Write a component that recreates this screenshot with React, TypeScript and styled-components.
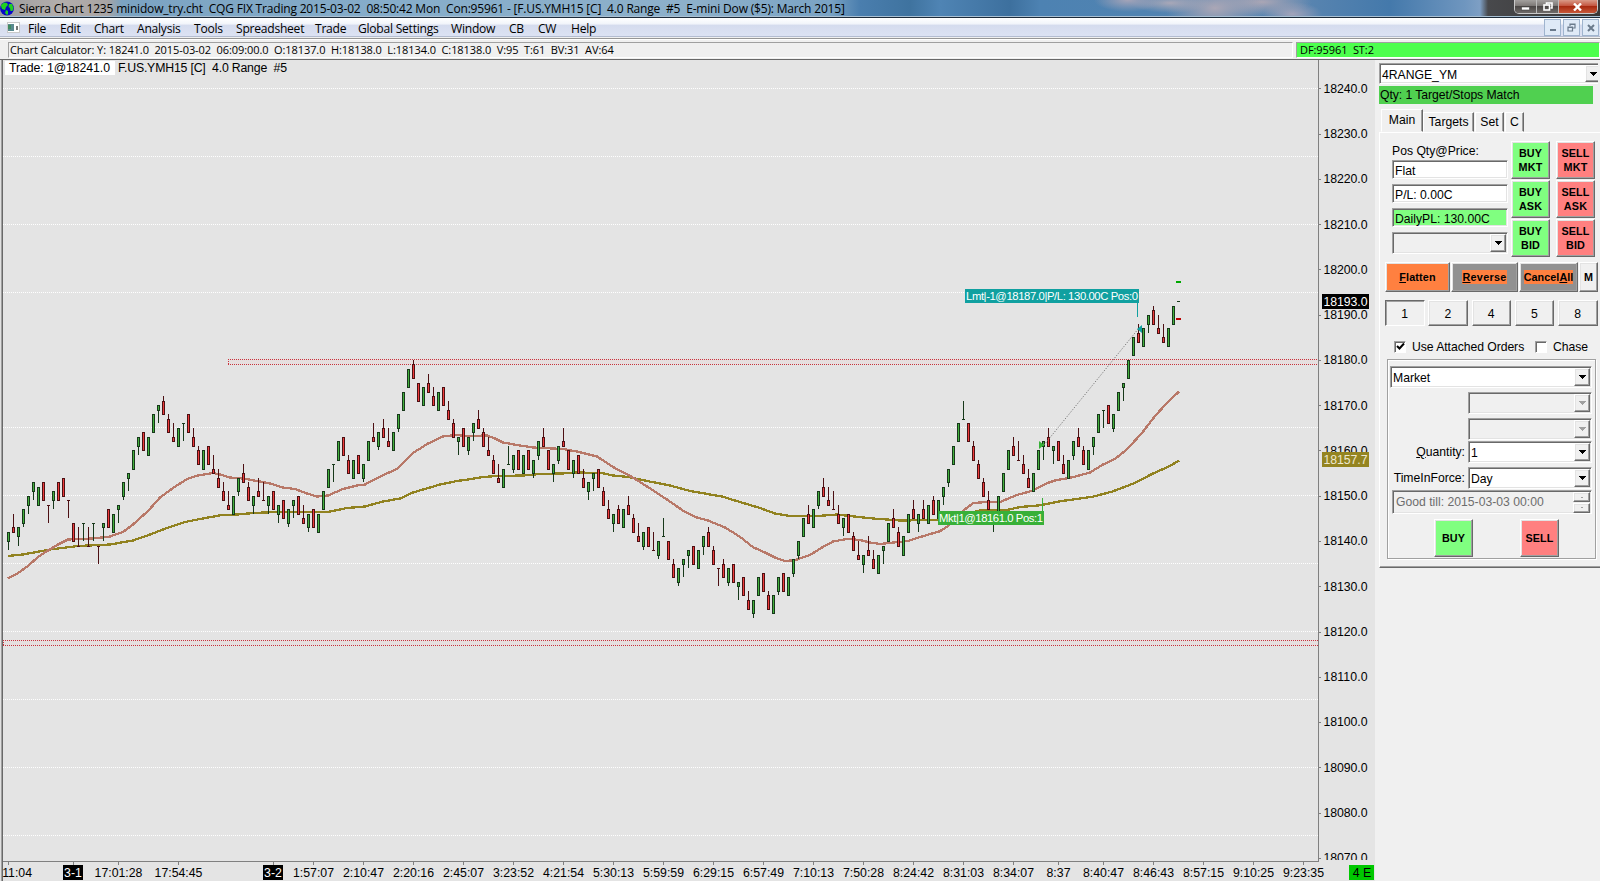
import React from 'react';
import styled, { createGlobalStyle, css } from 'styled-components';

const GlobalStyle = createGlobalStyle`
  * { box-sizing: border-box; }
  html, body { margin: 0; padding: 0; overflow: hidden; }
  body { background: #f0f0f0; font-family: 'Liberation Sans', Arial, sans-serif; font-size: 13px; color: #000; }
`;

/* ---------- chart data ---------- */

// direction, high (above 18000) and body size in points; t / f is a doji on top / at the foot
const BARS = `g142:2 r146:1 g143:2 g147:3 g150:2 g153:2 g152:4 r153:4 r148:t g151:2 r153:4 r154:4 r149:t r144:4 r143:f
g144:t r143:f g144:t r139:t g144:1 r147:4 g146:4 g148:1 g153:3 g155:1 g160:4 g163:2 r164:4 g163:4 g168:4
g170:1 r172:3 r168:3 r166:1 g165:4 g166:t r168:4 r165:2 r161:3 g160:4 r161:4 r159:1 r156:2 r153:2 r151:1
g150:4 g154:3 r157:2 r153:3 g150:2 r154:1 r153:f g150:2 r151:4 g148:2 r149:4 g147:3 g149:1 r150:4 r148:1
g146:3 r147:4 g146:4 g151:4 g156:4 g157:t g162:4 r163:4 r159:3 g158:4 r159:4 g157:3 g162:4 r166:1 g164:3
r167:2 r165:1 g164:4 g168:3 g173:4 g178:4 r180:3 r175:4 g174:4 r177:2 r174:2 g173:4 r174:4 r171:2 r167:3
g163:1 r165:4 g163:3 g166:2 r169:2 r165:3 r163:1 r159:3 r157:1 g156:4 g161:f g159:3 r160:4 g159:4 r160:4
g158:3 g162:3 r165:2 r160:4 g157:2 g161:3 r165:1 r160:4 g158:3 r159:4 r156:2 g153:2 g155:1 r156:4 r152:3
r149:2 g146:2 r148:3 g147:4 r150:2 r146:3 r144:1 g142:3 r143:4 r142:f g140:3 g145:f r140:4 r136:3 g134:3
g136:1 g138:1 r139:4 g138:4 g141:2 r143:3 r139:3 r134:t r136:3 g134:3 r135:4 g131:1 r132:4 r129:2 g127:3
g132:4 r133:4 r129:3 g128:4 g132:3 r133:4 g132:4 g136:3 g140:3 g145:4 r148:2 g147:4 g151:3 r154:2 r152:1
r151:f r148:2 g145:2 r146:4 r142:3 r140:1 g137:2 r141:1 r138:2 g137:4 g139:1 g144:4 r147:2 r143:3 g141:4
g146:4 r149:2 g146:2 r149:2 g148:4 r150:3 g149:4 g152:2 g156:3 g161:4 g166:4 g171:f r166:4 r162:3 r158:3
r154:3 r151:2 g146:2 g150:4 g155:4 g160:4 r163:2 r162:f r159:2 r156:2 g155:4 g160:4 g162:1 r165:2 g161:1
r162:4 r159:2 g158:4 g162:3 r165:2 r161:3 g160:4 g163:2 g168:4 g169:t r170:4 g168:3 g173:4 g175:1 g180:4
g185:4 r188:2 g187:4 g190:2 r192:3 r190:1 r188:1 g187:4 g192:4`.split(/\s+/);

const FAST_MA = `8,578.5 18,573 28,566 38,557 48,550.5 58,544.5 68,539.5 78,539 93,538.5 110,536.5 123,532 133,524.5
148,511 160,497.5 173,488 187,479 198,475.5 213,473 220,474.5 230,477.5 243,478.5 260,481.5 270,483.5 283,487.5
295,489 307,493.5 317,496.5 328,495.5 343,489 357,485.5 365,484.5 377,478 388,473 397,469 413,453 428,443.5
443,436.5 455,435 468,436 487,435.5 495,438.5 503,442.5 517,445 533,447.5 563,449 577,451.5 597,456.5 613,467
632,477 647,486.5 667,499.5 685,512 697,517.5 708,520.5 725,527.5 740,536.8 753,547.2 765,552.5 775,557.5
785,561 795,560.2 810,555 822,547.5 833,541.5 847,539 860,540 870,542.5 880,544 893,542.5 907,541.2 923,536.2
940,531.2 948,526 964,510 973,503.2 985,502 1000,502 1017,495 1033,490.5 1047,483.2 1055,480.5 1073,477.2
1090,472.5 1103,464.5 1115,459 1127,449.2 1142,433 1155,416 1167,403 1179,391.5`;

const SLOW_MA = `8,556 23,554.5 50,549.5 78,546 110,544.5 133,540.5 150,534.5 167,528 185,522 200,519 222,515 238,514.5
253,513 277,512 328,512 347,508 365,506.5 383,501.5 400,498.5 413,492.5 440,484.5 457,481 468,479.5 483,477
497,476 523,475.5 540,474 562,473.5 577,472.5 602,473 613,475.5 628,477 647,481 670,485.5 690,491 722,496.5
740,502 760,508 775,513.5 790,516 817,516 837,514.5 850,516 873,518.5 900,520.5 938,520 980,510.5 1007,510
1020,507 1040,505.3 1060,501.3 1093,496.7 1113,491.3 1133,483.7 1153,473.5 1170,466 1179,460.5`;

const TIMES: [number, string][] = [
  [118, '17:01:28'], [178, '17:54:45'], [313, '1:57:07'], [363, '2:10:47'], [413, '2:20:16'], [463, '2:45:07'],
  [513, '3:23:52'], [563, '4:21:54'], [613, '5:30:13'], [663, '5:59:59'], [713, '6:29:15'], [763, '6:57:49'],
  [813, '7:10:13'], [863, '7:50:28'], [913, '8:24:42'], [963, '8:31:03'], [1013, '8:34:07'], [1058, '8:37'],
  [1103, '8:40:47'], [1153, '8:46:43'], [1203, '8:57:15'], [1253, '9:10:25'], [1303, '9:23:35'],
];
const DAYS: [number, string][] = [[73, '3-1'], [273, '3-2']];

const GRID = [88, 156, 224, 292, 427, 495, 563, 631, 699, 767, 835];
const PRICES = Array.from({ length: 18 }, (_, i) => 18240 - i * 10);

const priceY = (p: number) => 88.3 + (240 - p) * 4.527;

const Candle = ({ bar, x }: { bar: string; x: number }) => {
  const up = bar[0] === 'g';
  const [high, body] = bar.slice(1).split(':');
  const top = Number(high);
  const dark = up ? '#17381a' : '#4c1013';
  const y0 = Math.round(priceY(top));
  const y1 = Math.round(priceY(top - 4));
  if (body === 't' || body === 'f') {
    return (
      <g fill={dark}>
        <rect x={x} y={y0} width={1} height={y1 - y0} />
        <rect x={x - 1} y={body === 't' ? y0 : y1} width={3} height={1} />
      </g>
    );
  }
  const size = Number(body);
  const b0 = up ? y0 : Math.round(priceY(top - 4 + size));
  const b1 = (up ? Math.round(priceY(top - size)) : y1) + 1;
  return (
    <g fill={dark}>
      <rect x={x} y={y0} width={1} height={y1 - y0} />
      <rect x={x - 1} y={b0} width={3} height={b1 - b0} />
      <rect x={x} y={b0 + 1} width={1} height={b1 - b0 - 2} fill={up ? '#43b03c' : '#ee3b3b'} />
    </g>
  );
};

const Zone = ({ x, y }: { x: number; y: number }) => (
  <g>
    <rect x={x} y={y} width={1318 - x} height={5} fill="#e6dfdf" />
    <g stroke="#c8323c" strokeDasharray="1 1">
      <line x1={x} x2={1318} y1={y + 0.5} y2={y + 0.5} />
      <line x1={x} x2={1318} y1={y + 5.5} y2={y + 5.5} />
      <line x1={x + 0.5} x2={x + 0.5} y1={y} y2={y + 5} />
    </g>
  </g>
);

const Chart = () => (
  <ChartSvg width={1375} height={821} viewBox="0 60 1375 821">
    <rect x={0} y={60} width={1375} height={821} fill="#e4e4e4" />
    <rect x={0} y={60} width={1} height={821} fill="#e0e0e0" />
    <rect x={1} y={60} width={1} height={821} fill="#a0a0a0" />
    <rect x={2} y={60} width={1} height={821} fill="#696969" />

    <g stroke="#fff" strokeDasharray="1 1" shapeRendering="crispEdges">
      {GRID.map((y) => (
        <line key={y} x1={3} x2={1318} y1={y + 0.5} y2={y + 0.5} />
      ))}
    </g>
    <g shapeRendering="crispEdges">
      <Zone x={228} y={359} />
      <Zone x={3} y={640} />
    </g>

    <g fill="none" strokeWidth={2.3} shapeRendering="crispEdges">
      <polyline points={SLOW_MA} stroke="#918220" />
      <polyline points={FAST_MA} stroke="#b87868" />
    </g>
    <g shapeRendering="crispEdges">
      {BARS.map((bar, i) => (
        <Candle key={i} bar={bar} x={8 + i * 5} />
      ))}
      <rect x={1177} y={301} width={3} height={1} fill="#17381a" />
      <rect x={1176} y={281} width={5} height={2} fill="#00a800" />
      <rect x={1176} y={318} width={5} height={2} fill="#b80000" />
    </g>

    <line x1={1044} y1={445} x2={1139} y2={328} stroke="#777" strokeDasharray="1.2 1.6" />
    <path d="M1039 441l5 4-5 4z" fill="#38b038" />
    <path d="M1142 325l-5 4 5 4z" fill="#10a0a0" />
    <rect x={1042} y={498} width={1} height={13} fill="#38b038" />
    <rect x={1137} y={303} width={1} height={14} fill="#10a0a0" />
    <rect x={965} y={289} width={174} height={14} fill="#10a0a0" />
    <rect x={938} y={511} width={106} height={14} fill="#38b038" />
    <g fill="#fff" fontSize={11.3}>
      <text x={966} y={300} textLength={172}>Lmt|-1@18187.0|P/L: 130.00C Pos:0</text>
      <text x={939} y={522} textLength={104}>Mkt|1@18161.0 Pos:1</text>
    </g>

    <rect x={5} y={61} width={110} height={14} fill="#fff" />
    <g fontSize={12.3}>
      <text x={9} y={72} textLength={101}>Trade: 1@18241.0</text>
      <text x={118} y={72} textLength={169}>{'F.US.YMH15 [C]\u00a0 4.0 Range\u00a0 #5'}</text>
    </g>

    {/* price scale */}
    <g fill="#808080" shapeRendering="crispEdges">
      <rect x={1318} y={60} width={1} height={802} />
      <rect x={3} y={861} width={1316} height={1} />
      {PRICES.map((p) => (
        <rect key={p} x={1319} y={Math.round(priceY(p - 18000))} width={2} height={1} />
      ))}
      {[8, ...DAYS.map((d) => d[0]), ...TIMES.map((t) => t[0])].map((x) => (
        <rect key={x} x={x} y={862} width={1} height={3} />
      ))}
    </g>
    <clipPath id="scale">
      <rect x={1319} y={60} width={56} height={800} />
    </clipPath>
    <g fontSize={12.3} clipPath="url(#scale)">
      {PRICES.map((p) => (
        <text key={p} x={1323.5} y={priceY(p - 18000) + 4.4} textLength={44}>{p}.0</text>
      ))}
    </g>
    <rect x={1322} y={294} width={47} height={15} fill="#000" />
    <rect x={1322} y={452} width={47} height={15} fill="#948420" />
    <g fontSize={12.3} fill="#fff">
      <text x={1323.5} y={306} textLength={44}>18193.0</text>
      <text x={1323.5} y={464} textLength={44} fill="#eee8d0">18157.7</text>
    </g>

    {/* time scale */}
    <g fontSize={12.3} textAnchor="middle">
      <text x={32} y={877} textAnchor="end">11:04</text>
      {TIMES.map(([x, label]) => (
        <text key={x} x={x + 0.5} y={877}>{label}</text>
      ))}
      {DAYS.map(([x, label]) => (
        <g key={x}>
          <rect x={x - 10} y={865} width={20} height={15} fill="#000" />
          <text x={x} y={877} fill="#fff">{label}</text>
        </g>
      ))}
      <rect x={1349} y={865} width={25} height={15} fill="#00c800" />
      <text x={1362} y={877}>4 E</text>
    </g>
  </ChartSvg>
);

/* ---------- frame ---------- */

const MENU: [string, number][] = [
  ['File', 32], ['Edit', 34], ['Chart', 43], ['Analysis', 57], ['Tools', 42], ['Spreadsheet', 79], ['Trade', 43],
  ['Global Settings', 93], ['Window', 58], ['CB', 29], ['CW', 33], ['Help', 40],
];

const Arrow = ({ off, up, small }: { off?: boolean; up?: boolean; small?: boolean }) => (
  <svg width={small ? 4 : 7} height={small ? 2 : 4} viewBox="0 0 7 4" shapeRendering="crispEdges">
    <path d={up ? 'M0 4h7L3.5 0z' : 'M0 0h7L3.5 4z'} fill={off ? '#a0a0a0' : '#000'} />
  </svg>
);

const Combo = ({ value, width, height = 22, off, grey }: {
  value?: string; width: number; height?: number; off?: boolean; grey?: boolean;
}) => (
  <Field $w={width} $h={height} $bg={off || grey ? '#f0f0f0' : '#fff'}>
    <FieldText>{value}</FieldText>
    <DropButton>
      <Arrow off={off} />
    </DropButton>
  </Field>
);

const SIDES = [['BUY', '#80ff80'], ['SELL', '#ff8080']];

const App = () => (
  <Screen>
    <GlobalStyle />
    <TitleBar>
      <svg width={14} height={15} viewBox="0 0 14 15">
        <circle cx={7} cy={7.5} r={6.9} fill="#0808c8" />
        <path d="M1 4L4 1.5l3 .5 1 2-2 2-1 3-3-1-1-3zM6 9l2 1 0 3-1 1-2-2zM9 3l3 0 1.500 4-1 3-2 0-.5-3-1.500-1z" fill="#20d020" />
      </svg>
      <TitleText>Sierra Chart 1235 minidow_try.cht  CQG FIX Trading 2015-03-02  08:50:42 Mon  Con:95961 - [F.US.YMH15 [C]  4.0 Range  #5  E-mini Dow ($5): March 2015]</TitleText>
      <Caption>
        <CaptionButton $w={22}>
          <svg width={9} height={8}><rect x={0.5} y={4} width={8} height={3} fill="#fff" stroke="#444" strokeWidth={0.6} /></svg>
        </CaptionButton>
        <CaptionButton $w={22}>
          <svg width={10} height={9} fill="none" stroke="#fff" strokeWidth={1.6}>
            <path d="M3.500 2.500V1H9v5H7.500" />
            <rect x={1} y={3} width={5.5} height={5} />
          </svg>
        </CaptionButton>
        <CaptionButton $w={38} $close>
          <svg width={9} height={8} stroke="#fff" strokeWidth={2.4}><path d="M1 .5l7 7M8 .5l-7 7" /></svg>
        </CaptionButton>
      </Caption>
    </TitleBar>

    <MenuBar>
      <MenuIcon width={13} height={11} shapeRendering="crispEdges">
        <rect x={0.5} y={0.5} width={12} height={10} fill="#fff" stroke="#c8c8c8" />
        <rect x={1} y={2} width={6} height={7} fill="#5a8a90" />
        <rect x={1} y={3} width={3} height={4} fill="#3f8a60" />
        <rect x={9} y={4} width={2} height={4} fill="#777" />
      </MenuIcon>
      {MENU.map(([label, width]) => (
        <MenuItem key={label} $w={width}>{label}</MenuItem>
      ))}
      <MdiButtons>
        <MdiButton>
          <svg width={8} height={8}><rect x={1} y={5} width={6} height={2} fill="#6a7a8c" /></svg>
        </MdiButton>
        <MdiButton>
          <svg width={9} height={9} fill="none" stroke="#6a7a8c" strokeWidth={1.2}>
            <path d="M3 3V1h5v4H6M3 1.500h5" />
            <path d="M1 4h4.500v4H1zM1 4.500h4.500" />
          </svg>
        </MdiButton>
        <MdiButton>
          <svg width={8} height={8} stroke="#6a7a8c" strokeWidth={2}><path d="M1 1l6 6M7 1l-6 6" /></svg>
        </MdiButton>
      </MdiButtons>
    </MenuBar>

    <StatusRow>
      <StatusCell $w={1285}>Chart Calculator: Y: 18241.0  2015-03-02  06:09:00.0  O:18137.0  H:18138.0  L:18134.0  C:18138.0  V:95  T:61  BV:31  AV:64</StatusCell>
      <StatusCell $w={304} $green>DF:95961  ST:2</StatusCell>
    </StatusRow>

    <Workspace>
      <Chart />
      <TradePanel>
        <SymbolCombo>
          <Combo value="4RANGE_YM" width={224} height={21} />
        </SymbolCombo>
        <MatchBar>Qty: 1 Target/Stops Match</MatchBar>
        <Tabs>
          <Tab $w={42} $active>Main</Tab>
          <Tab $w={51}>Targets</Tab>
          <Tab $w={29}>Set</Tab>
          <Tab $w={19}>C</Tab>
        </Tabs>
        <TabPage>
          <PositionRow>
            <PositionInfo>
              <Label>Pos Qty@Price:</Label>
              <Field $w={116} $h={19} $bg="#fff"><FieldText>Flat</FieldText></Field>
              <Field $w={116} $h={19} $bg="#fff"><FieldText>P/L: 0.00C</FieldText></Field>
              <Field $w={116} $h={19} $bg="#80ff80"><FieldText>DailyPL: 130.00C</FieldText></Field>
              <Combo width={116} grey />
            </PositionInfo>
            <OrderGrid>
              {['MKT', 'ASK', 'BID'].map((kind) =>
                SIDES.map(([side, colour]) => (
                  <BigButton key={side + kind} $w={39} $h={38} $bg={colour}>{side}<br />{kind}</BigButton>
                ))
              )}
            </OrderGrid>
          </PositionRow>

          <ActionRow>
            <BigButton $w={65} $h={30} $bg="#ff8040"><span><u>F</u>latten</span></BigButton>
            <BigButton $w={67} $h={30} $bg="#919191"><Mark><u>R</u>everse</Mark></BigButton>
            <BigButton $w={59} $h={30} $bg="#919191"><Mark $tight>Cancel<u>A</u>ll</Mark></BigButton>
            <BigButton $w={19} $h={30} $bg="#f0f0f0">M</BigButton>
          </ActionRow>

          <QtyRow>
            {['1', '2', '4', '5', '8'].map((n) => (
              <QtyButton key={n} $pressed={n === '1'}>{n}</QtyButton>
            ))}
          </QtyRow>

          <CheckRow>
            <CheckBox>
              <svg width={9} height={9} fill="none" stroke="#000" strokeWidth={2}><path d="M1 4l2.500 2.500L8 1.500" /></svg>
            </CheckBox>
            <CheckLabel $w={123}>Use Attached Orders</CheckLabel>
            <CheckBox />
            <CheckLabel $w={40}>Chase</CheckLabel>
          </CheckRow>

          <OrderGroup>
            <Combo value="Market" width={202} />
            <FormRow $mt={4}><Combo width={124} off /></FormRow>
            <FormRow $mt={4}><Combo width={124} off /></FormRow>
            <FormRow $mt={1}>
              <FormLabel><u>Q</u>uantity:</FormLabel>
              <Combo value="1" width={124} />
            </FormRow>
            <FormRow $mt={4}>
              <FormLabel>TimeInForce:</FormLabel>
              <Combo value="Day" width={124} />
            </FormRow>
            <DateRow>
              <Field $w={200} $h={24} $bg="#f0f0f0">
                <FieldText $off>Good till: 2015-03-03 00:00</FieldText>
                <Spinner>
                  <SpinButton><Arrow off up small /></SpinButton>
                  <SpinButton><Arrow off small /></SpinButton>
                </Spinner>
              </Field>
            </DateRow>
            <SubmitRow>
              {SIDES.map(([side, colour]) => (
                <BigButton key={side} $w={39} $h={38} $bg={colour}>{side}</BigButton>
              ))}
            </SubmitRow>
          </OrderGroup>
        </TabPage>
      </TradePanel>
    </Workspace>
  </Screen>
);

const raised = css`
  border: 1px solid;
  border-color: #fff #696969 #696969 #fff;
  box-shadow: inset -1px -1px 0 #a0a0a0, inset 1px 1px 0 #e3e3e3;
`;

const Screen = styled.div`
  width: 1600px;
  height: 881px;
  display: flex;
  flex-direction: column;
  overflow: hidden;
  background: #f0f0f0;
`;

const TitleBar = styled.div`
  display: flex;
  align-items: center;
  height: 18px;
  flex: none;
  border-bottom: 1px solid #1d2b3a;
  box-shadow: inset 0 -1px 0 #a9c0d3;
  background:
    radial-gradient(ellipse 34px 12px at 1128px 0, #a5a4b8, transparent),
    radial-gradient(ellipse 40px 10px at 1170px 3px, #a9a8b8, transparent),
    radial-gradient(ellipse 50px 26px at 1215px 8px, #aba7b6, transparent),
    radial-gradient(ellipse 50px 14px at 1262px 2px, #aaa6b5, transparent),
    radial-gradient(ellipse 30px 12px at 1292px 14px, #a3a4ba, transparent),
    linear-gradient(90deg, #9d9d9f 0, #b3aeac 60px, #a8a4a4 108px, #7ba3c2 122px, #86adca 400px, #8db0ca 690px,
      #7aa3c4 830px, #4a7eae 860px, #3f739f 910px, #4f84b4 940px, #3d709e 1010px, #4d82b2 1040px, #5083b1 1140px,
      #5a85b0 1300px, #4479ab 1390px, #6f96bf 1465px, #7e9fc4 1480px, #48494c 1488px, #3a3736 1600px);
`;

const TitleText = styled.div`
  flex: 1;
  margin-left: 5px;
  font: 12px 'Open Sans', 'Noto Sans', sans-serif;
  letter-spacing: -0.18px;
  line-height: 17px;
  white-space: pre;
`;

const Caption = styled.div`
  display: flex;
  align-self: flex-start;
  height: 14px;
  margin-right: 2px;
  border: 1px solid #c9c9c9;
  border-top: 0;
  border-radius: 0 0 5px 5px;
  overflow: hidden;
`;

const CaptionButton = styled.div<{ $w: number; $close?: boolean }>`
  display: flex;
  align-items: center;
  justify-content: center;
  width: ${(p) => p.$w}px;
  border-right: 1px solid ${(p) => (p.$close ? 'transparent' : '#bbb')};
  background: ${(p) =>
    p.$close
      ? 'linear-gradient(#d99a88 0, #c4553f 45%, #a82a10 50%, #c8583a)'
      : 'linear-gradient(#a3a09e 0, #7c7876 45%, #4b4746 50%, #6f6b69)'};
`;

const MenuBar = styled.div`
  display: flex;
  align-items: center;
  height: 19px;
  flex: none;
  padding: 1px 0 0 7px;
  border-bottom: 1px solid #b3bcd0;
  background: linear-gradient(#fff 0, #f3f6fb 30%, #e6eaf5 36%, #d5dcee 40%, #dce2f3 100%);
  font: 12.1px 'Open Sans', 'Noto Sans', sans-serif;
`;

const MenuIcon = styled.svg`
  margin-right: 8px;
`;

const MenuItem = styled.div<{ $w: number }>`
  flex: 0 0 ${(p) => p.$w}px;
  letter-spacing: -0.25px;
  white-space: nowrap;
  line-height: 17px;
  padding-top: 1px;
`;

const MdiButtons = styled.div`
  display: flex;
  gap: 2px;
  margin-left: auto;
  padding-right: 1px;
`;

const MdiButton = styled.div`
  display: flex;
  align-items: center;
  justify-content: center;
  width: 17px;
  height: 17px;
  border: 1px solid #9fb4ce;
  background: #dfeaf7;
`;

const StatusRow = styled.div`
  display: flex;
  gap: 3px;
  flex: none;
  height: 21px;
  margin-top: 1px;
  padding: 3px 0 0 8px;
  border-top: 1px solid #969696;
  box-shadow: inset 0 1px 0 #fff;
`;

const StatusCell = styled.div<{ $w: number; $green?: boolean }>`
  width: ${(p) => p.$w}px;
  height: 16px;
  padding-left: ${(p) => (p.$green ? 3 : 1)}px;
  border: 1px solid;
  border-color: #a0a0a0 #fff #fff #a0a0a0;
  background: ${(p) => (p.$green ? '#4dff4d' : '#f0f0f0')};
  font: 11px 'Open Sans', 'Noto Sans', sans-serif;
  line-height: 13px;
  letter-spacing: -0.08px;
  white-space: pre;
`;

const Workspace = styled.div`
  display: flex;
  flex: 1;
  border-top: 1px solid #696969;
`;

const ChartSvg = styled.svg`
  display: block;
  flex: none;
  font-family: 'Liberation Sans', Arial, sans-serif;
`;

const TradePanel = styled.div`
  width: 225px;
  padding: 3px 0 0 4px;
  overflow: hidden;
  font-size: 12.2px;
`;

const SymbolCombo = styled.div`
  width: 219px;
  overflow: hidden;
`;

const MatchBar = styled.div`
  width: 214px;
  height: 18px;
  margin-top: 2px;
  padding-left: 1px;
  background: #50d050;
  line-height: 19px;
  letter-spacing: -0.05px;
`;

const Tabs = styled.div`
  display: flex;
  align-items: flex-end;
  height: 28px;
  padding-left: 2px;
`;

const Tab = styled.div<{ $w: number; $active?: boolean }>`
  width: ${(p) => p.$w}px;
  height: ${(p) => (p.$active ? 23 : 20)}px;
  border: 1px solid;
  border-color: #fff #696969 transparent #fff;
  box-shadow: inset -1px 0 0 #a0a0a0;
  line-height: ${(p) => (p.$active ? 20 : 19)}px;
  text-align: center;
  white-space: nowrap;
  &:nth-child(3) { margin-left: 1px; }
  &:nth-child(4) { margin-left: 1px; }
`;

const TabPage = styled.div`
  width: 222px;
  height: 436px;
  border-top: 1px solid #fff;
  border-left: 1px solid #fff;
  border-bottom: 1px solid #696969;
  box-shadow: inset 0 -1px 0 #a0a0a0;
  padding-top: 8px;
`;

const PositionRow = styled.div`
  display: flex;
  gap: 3px;
  height: 118px;
  padding-left: 12px;
`;

const PositionInfo = styled.div`
  flex: none;
  display: flex;
  flex-direction: column;
  gap: 5px;
`;

const Label = styled.div`
  height: 14px;
  padding-top: 1px;
  line-height: 18px;
  white-space: nowrap;
`;

const Field = styled.div<{ $w: number; $h: number; $bg: string }>`
  display: flex;
  align-items: center;
  width: ${(p) => p.$w}px;
  height: ${(p) => p.$h}px;
  border: 1px solid;
  border-color: #a0a0a0 #fff #fff #a0a0a0;
  box-shadow: inset 1px 1px 0 #696969, inset -1px -1px 0 #e3e3e3;
  background: ${(p) => p.$bg};
`;

const FieldText = styled.div<{ $off?: boolean }>`
  flex: 1;
  padding: ${(p) => (p.$off ? 0 : 2)}px 0 0 ${(p) => (p.$off ? 3 : 2)}px;
  color: ${(p) => (p.$off ? '#6d6d6d' : '#000')};
  white-space: nowrap;
`;

const DropButton = styled.div`
  display: flex;
  align-items: center;
  justify-content: center;
  width: 16px;
  align-self: stretch;
  margin: 1px;
  background: #f0f0f0;
  ${raised}
`;

const OrderGrid = styled.div`
  display: grid;
  grid-template-columns: 39px 39px;
  grid-auto-rows: 38px;
  gap: 1px 6px;
`;

const BigButton = styled.div<{ $w: number; $h: number; $bg: string }>`
  display: flex;
  align-items: center;
  justify-content: center;
  flex: none;
  width: ${(p) => p.$w}px;
  height: ${(p) => p.$h}px;
  background: ${(p) => p.$bg};
  ${raised}
  font-size: 10.800px;
  font-weight: bold;
  line-height: 14px;
  letter-spacing: 0.15px;
  text-align: center;
  white-space: nowrap;
`;

const Mark = styled.span<{ $tight?: boolean }>`
  background: #ff8040;
  letter-spacing: ${(p) => (p.$tight ? 0.05 : 0.3)}px;
`;

const ActionRow = styled.div`
  display: flex;
  gap: 1px;
  margin: 3px 0 0 5px;
`;

const QtyRow = styled.div`
  display: flex;
  gap: 3.750px;
  margin: 8px 0 0 5px;
`;

const QtyButton = styled.div<{ $pressed: boolean }>`
  flex: none;
  width: 39.500px;
  height: 26px;
  background: #f0f0f0;
  ${raised}
  ${(p) => p.$pressed && 'border-color: #696969 #fff #fff #696969; box-shadow: inset 1px 1px 0 #a0a0a0;'}
  line-height: 26px;
  text-align: center;
`;

const CheckRow = styled.div`
  display: flex;
  align-items: center;
  height: 33px;
  padding: 8px 0 0 14px;
`;

const CheckBox = styled.div`
  display: flex;
  align-items: center;
  justify-content: center;
  flex: none;
  width: 12px;
  height: 12px;
  border: 1px solid;
  border-color: #a0a0a0 #fff #fff #a0a0a0;
  box-shadow: inset 1px 1px 0 #696969;
  background: #fff;
`;

const CheckLabel = styled.div<{ $w: number }>`
  width: ${(p) => p.$w}px;
  margin-left: 6px;
  letter-spacing: -0.05px;
  white-space: nowrap;
`;

const OrderGroup = styled.div`
  width: 209px;
  height: 200px;
  margin-left: 7px;
  padding: 6px 0 0 2px;
  border: 1px solid #a0a0a0;
  box-shadow: inset 1px 1px 0 #fff, 1px 1px 0 #fff;
`;

const FormRow = styled.div<{ $mt: number }>`
  display: flex;
  align-items: center;
  justify-content: flex-end;
  width: 202px;
  margin-top: ${(p) => p.$mt}px;
`;

const FormLabel = styled.div`
  margin-right: 3px;
  line-height: 16px;
`;

const DateRow = styled.div`
  padding: 1px 0 0 2px;
`;

const Spinner = styled.div`
  width: 17px;
  margin-right: 1px;
  display: flex;
  flex-direction: column;
  gap: 1px;
`;

const SpinButton = styled.div`
  display: flex;
  align-items: center;
  justify-content: center;
  height: 10px;
  ${raised}
`;

const SubmitRow = styled.div`
  display: flex;
  gap: 47px;
  margin: 5px 0 0 44px;
`;

export default App;
